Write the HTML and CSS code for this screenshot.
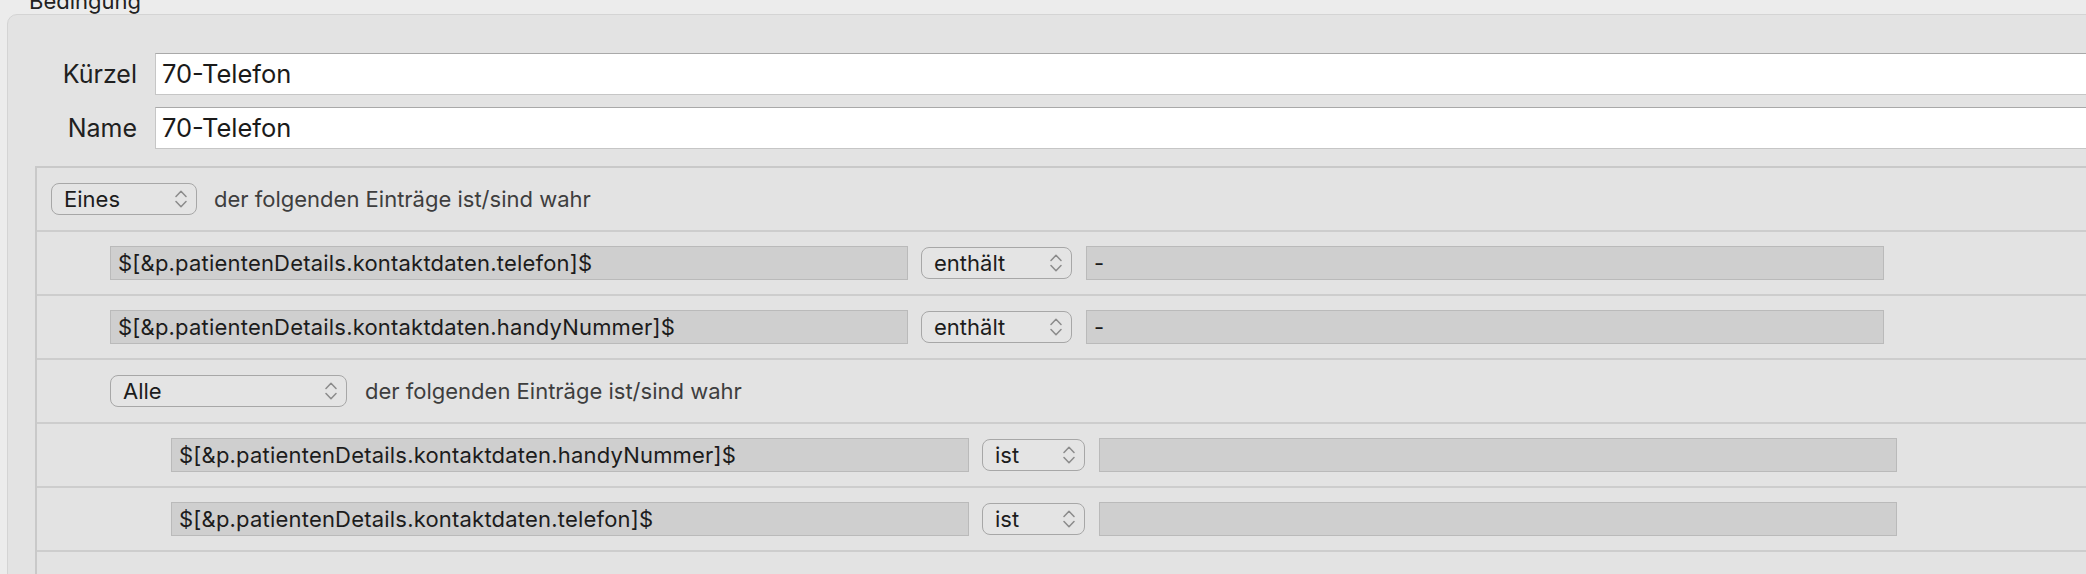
FILE: index.html
```html
<!DOCTYPE html>
<html lang="de">
<head>
<meta charset="utf-8">
<title>Bedingung</title>
<link rel="stylesheet" href="styles.css">
</head>
<body>
<div class="legend">Bedingung</div>
<section class="group">
  <div class="form">
    <label class="form-label">Kürzel</label>
    <div class="text-field">70-Telefon</div>
    <label class="form-label">Name</label>
    <div class="text-field">70-Telefon</div>
  </div>
  <div class="rules">
    <div class="rule-row level-0">
      <div class="popup popup-eines"><span>Eines</span><svg class="chev" viewBox="0 0 12 20"><path d="M1 7.5 6 2.2 11 7.5M1 12.5 6 17.8 11 12.5"/></svg></div>
      <span class="rule-text">der folgenden Einträge ist/sind wahr</span>
    </div>
    <div class="rule-row level-1">
      <div class="key-field">$[&amp;p.patientenDetails.kontaktdaten.telefon]$</div>
      <div class="popup popup-enthaelt"><span>enthält</span><svg class="chev" viewBox="0 0 12 20"><path d="M1 7.5 6 2.2 11 7.5M1 12.5 6 17.8 11 12.5"/></svg></div>
      <div class="value-field">-</div>
    </div>
    <div class="rule-row level-1">
      <div class="key-field">$[&amp;p.patientenDetails.kontaktdaten.handyNummer]$</div>
      <div class="popup popup-enthaelt"><span>enthält</span><svg class="chev" viewBox="0 0 12 20"><path d="M1 7.5 6 2.2 11 7.5M1 12.5 6 17.8 11 12.5"/></svg></div>
      <div class="value-field">-</div>
    </div>
    <div class="rule-row level-1">
      <div class="popup popup-alle"><span>Alle</span><svg class="chev" viewBox="0 0 12 20"><path d="M1 7.5 6 2.2 11 7.5M1 12.5 6 17.8 11 12.5"/></svg></div>
      <span class="rule-text rule-text-alle">der folgenden Einträge ist/sind wahr</span>
    </div>
    <div class="rule-row level-2">
      <div class="key-field">$[&amp;p.patientenDetails.kontaktdaten.handyNummer]$</div>
      <div class="popup popup-ist"><span>ist</span><svg class="chev" viewBox="0 0 12 20"><path d="M1 7.5 6 2.2 11 7.5M1 12.5 6 17.8 11 12.5"/></svg></div>
      <div class="value-field"></div>
    </div>
    <div class="rule-row level-2">
      <div class="key-field">$[&amp;p.patientenDetails.kontaktdaten.telefon]$</div>
      <div class="popup popup-ist"><span>ist</span><svg class="chev" viewBox="0 0 12 20"><path d="M1 7.5 6 2.2 11 7.5M1 12.5 6 17.8 11 12.5"/></svg></div>
      <div class="value-field"></div>
    </div>
    <div class="rule-row rule-empty"></div>
  </div>
</section>
</body>
</html>
```

FILE: styles.css
```css
html, body {
  margin: 0;
  padding: 0;
  overflow: hidden;
}

body {
  background: #ececec;
  font-family: Inter, "Noto Sans", sans-serif;
  color: #1f1f1f;
}

.legend {
  margin-top: -10px;
  height: 24px;
  padding-left: 29px;
  font-size: 22px;
  line-height: 22px;
  color: #222222;
}

.group {
  margin-left: 7px;
  margin-right: -40px;
  background: #e3e3e3;
  border: 1px solid #d4d4d4;
  border-radius: 10px 10px 0 0;
  padding-top: 38px;
  min-height: 620px;
}

.form {
  display: grid;
  grid-template-columns: 129px 1fr;
  column-gap: 18px;
  row-gap: 12px;
  align-items: center;
}

.form-label {
  text-align: right;
  font-size: 25px;
  color: #202020;
}

.text-field {
  height: 42px;
  box-sizing: border-box;
  background: #ffffff;
  border: 1px solid #c6c6c6;
  border-top-color: #a9a9a9;
  border-right: none;
  padding-left: 6px;
  font-size: 25.5px;
  line-height: 40px;
  color: #1a1a1a;
}

.rules {
  margin-top: 17px;
  margin-left: 27px;
  border-top: 2px solid #c9c9c9;
  border-left: 2px solid #c9c9c9;
}

.rule-row {
  height: 62px;
  border-bottom: 2px solid #cdcdcd;
  display: flex;
  align-items: center;
  font-size: 22px;
}

.level-0 { padding-left: 14px; }
.level-1 { padding-left: 73px; }
.level-2 { padding-left: 134px; }

.popup {
  height: 32px;
  box-sizing: border-box;
  border: 1.5px solid #a7a7a7;
  border-radius: 8px;
  background: #e4e4e4;
  display: flex;
  align-items: center;
  padding-left: 12px;
  color: #1c1c1c;
  flex: none;
}

.chev {
  width: 12px;
  height: 20px;
  margin-left: auto;
  margin-right: 9px;
  fill: none;
  stroke: #8b8b8b;
  stroke-width: 1.5;
  stroke-linecap: round;
  stroke-linejoin: round;
}

.popup-eines { width: 146px; }
.popup-alle { width: 237px; }
.popup-enthaelt { width: 151px; margin-left: 13px; }
.popup-ist { width: 103px; margin-left: 13px; }

.rule-text {
  margin-left: 17px;
  color: #3e3e3e;
}

.rule-text-alle { margin-left: 18px; }

.key-field,
.value-field {
  width: 798px;
  height: 34px;
  box-sizing: border-box;
  background: #cfcfcf;
  border: 1px solid #bababa;
  padding-left: 7px;
  display: flex;
  align-items: center;
  color: #1c1c1c;
  letter-spacing: 0.2px;
  flex: none;
}

.value-field { margin-left: 14px; }
```
